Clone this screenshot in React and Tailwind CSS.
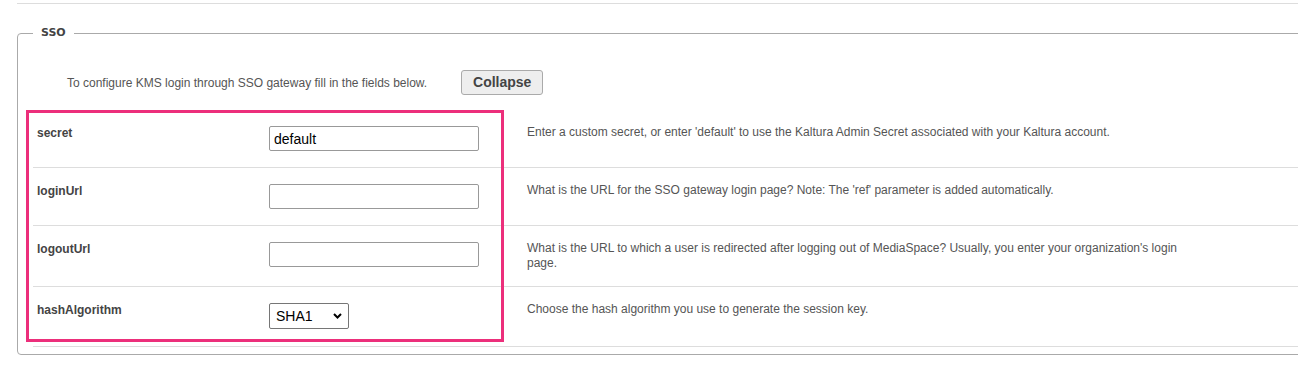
import React from "react";

const rows = [
  {
    name: "secret",
    value: "default",
    help: "Enter a custom secret, or enter 'default' to use the Kaltura Admin Secret associated with your Kaltura account.",
  },
  {
    name: "loginUrl",
    value: "",
    help: "What is the URL for the SSO gateway login page? Note: The 'ref' parameter is added automatically.",
  },
  {
    name: "logoutUrl",
    value: "",
    help: "What is the URL to which a user is redirected after logging out of MediaSpace? Usually, you enter your organization's login page.",
  },
  {
    name: "hashAlgorithm",
    select: ["SHA1", "SHA256"],
    help: "Choose the hash algorithm you use to generate the session key.",
  },
];

function Field({ row }) {
  if (row.select) {
    return (
      <div className="relative w-[80px]">
        <select
          defaultValue={row.select[0]}
          className="block h-[26px] w-[80px] appearance-none rounded-[2px] border border-[#767676] bg-white pl-[6px] text-[14px] text-black"
        >
          {row.select.map((o) => (
            <option key={o}>{o}</option>
          ))}
        </select>
        <svg
          className="pointer-events-none absolute right-[7px] top-[10px]"
          width="9"
          height="6"
          viewBox="0 0 9 6"
        >
          <path d="M1 1l3.5 3.5L8 1" fill="none" stroke="#000" strokeWidth="2" />
        </svg>
      </div>
    );
  }
  return (
    <input
      type="text"
      defaultValue={row.value}
      className="block h-[25px] w-[210px] rounded-[2px] border border-[#999] bg-white px-[4px] text-[14px] text-black outline-none"
    />
  );
}

export default function App() {
  return (
    <div
      className="w-[1298px] h-[370px] overflow-hidden bg-white text-[12px]"
      style={{ fontFamily: "'Liberation Sans', Arial, sans-serif" }}
    >
      <div className="ml-[17px] mt-[3px] w-[1400px] border-t border-[#ddd]" />

      <fieldset className="ml-[17px] mt-[22px] w-[1400px] rounded-[4px] border border-[#aaa] pb-[7px] pl-[15px]">
        <legend
          className="px-2 text-[11px] font-bold leading-[14px] text-[#444]"
          style={{ fontFamily: "'DejaVu Sans', Verdana, sans-serif" }}
        >
          SSO
        </legend>

        <div className="mt-[30px] flex items-center">
          <p className="ml-[34px] text-[#555]">
            To configure KMS login through SSO gateway fill in the fields below.
          </p>
          <button className="ml-[34px] h-[25px] w-[82px] rounded-[3px] border border-[#aaa] bg-[#eee] text-[14px] font-bold text-[#444]">
            Collapse
          </button>
        </div>

        <div className="relative mt-[15px]">
          {rows.map((row) => (
            <div key={row.name} className="flex border-b border-[#ddd]">
              <div className="w-[236px] pl-[4px] pt-[16px] font-bold leading-[14px] text-[#444]">
                {row.name}
              </div>
              <div className={"w-[258px] pt-[16px] " + (row.select ? "pb-[17px]" : "pb-[16px]")}>
                <Field row={row} />
              </div>
              <div className="w-[670px] py-[15px] leading-[15px] text-[#555]">
                {row.help}
              </div>
            </div>
          ))}
          <div className="pointer-events-none absolute left-[-7px] top-0 h-[232px] w-[478px] border-[3px] border-[#ec2f7b]" />
        </div>
      </fieldset>
    </div>
  );
}
